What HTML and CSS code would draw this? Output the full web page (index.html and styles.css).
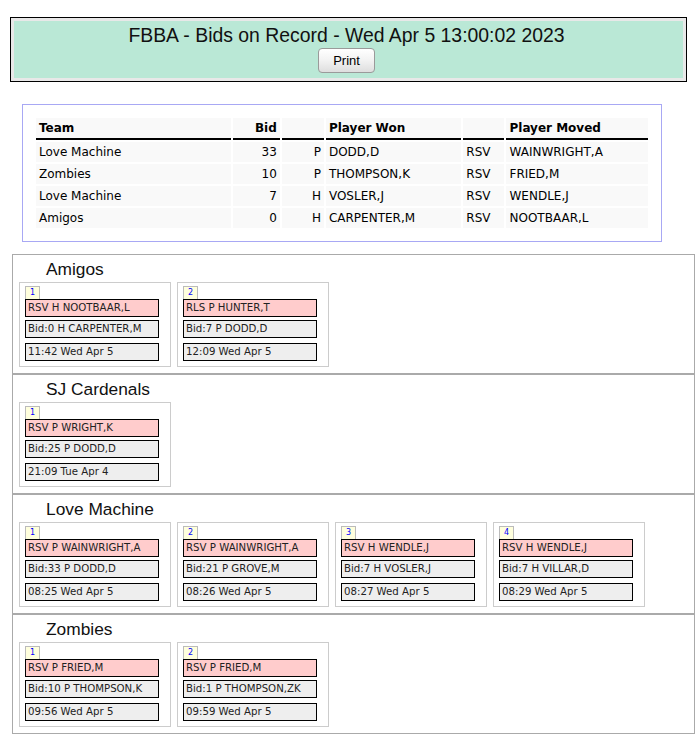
FILE: index.html
```html
<!DOCTYPE html>
<html>
<head>
<meta charset="utf-8">
<title>FBBA - Bids on Record</title>
<link rel="stylesheet" href="styles.css">
</head>
<body>
<div class="banner">
  <div class="banner-inner">
    <div class="title">FBBA - Bids on Record - Wed Apr 5 13:00:02 2023</div>
    <button class="print" type="button">Print</button>
  </div>
</div>

<div class="bids">
  <table class="bid-table">
    <thead>
      <tr>
        <th class="c-team">Team</th>
        <th class="c-bid num">Bid</th>
        <th class="c-pos"></th>
        <th class="c-won">Player Won</th>
        <th class="c-act"></th>
        <th class="c-moved">Player Moved</th>
      </tr>
    </thead>
    <tbody>
      <tr><td>Love Machine</td><td class="num">33</td><td class="num">P</td><td>DODD,D</td><td>RSV</td><td>WAINWRIGHT,A</td></tr>
      <tr><td>Zombies</td><td class="num">10</td><td class="num">P</td><td>THOMPSON,K</td><td>RSV</td><td>FRIED,M</td></tr>
      <tr><td>Love Machine</td><td class="num">7</td><td class="num">H</td><td>VOSLER,J</td><td>RSV</td><td>WENDLE,J</td></tr>
      <tr><td>Amigos</td><td class="num">0</td><td class="num">H</td><td>CARPENTER,M</td><td>RSV</td><td>NOOTBAAR,L</td></tr>
    </tbody>
  </table>
</div>

<div class="teams">
  <section class="team">
    <h2 class="team-name">Amigos</h2>
    <div class="cards">
      <div class="card">
        <div class="badge">1</div>
        <div class="row move">RSV H NOOTBAAR,L</div>
        <div class="row bid">Bid:0 H CARPENTER,M</div>
        <div class="row time">11:42 Wed Apr 5</div>
      </div>
      <div class="card">
        <div class="badge">2</div>
        <div class="row move">RLS P HUNTER,T</div>
        <div class="row bid">Bid:7 P DODD,D</div>
        <div class="row time">12:09 Wed Apr 5</div>
      </div>
    </div>
  </section>

  <section class="team">
    <h2 class="team-name">SJ Cardenals</h2>
    <div class="cards">
      <div class="card">
        <div class="badge">1</div>
        <div class="row move">RSV P WRIGHT,K</div>
        <div class="row bid">Bid:25 P DODD,D</div>
        <div class="row time">21:09 Tue Apr 4</div>
      </div>
    </div>
  </section>

  <section class="team">
    <h2 class="team-name">Love Machine</h2>
    <div class="cards">
      <div class="card">
        <div class="badge">1</div>
        <div class="row move">RSV P WAINWRIGHT,A</div>
        <div class="row bid">Bid:33 P DODD,D</div>
        <div class="row time">08:25 Wed Apr 5</div>
      </div>
      <div class="card">
        <div class="badge">2</div>
        <div class="row move">RSV P WAINWRIGHT,A</div>
        <div class="row bid">Bid:21 P GROVE,M</div>
        <div class="row time">08:26 Wed Apr 5</div>
      </div>
      <div class="card">
        <div class="badge">3</div>
        <div class="row move">RSV H WENDLE,J</div>
        <div class="row bid">Bid:7 H VOSLER,J</div>
        <div class="row time">08:27 Wed Apr 5</div>
      </div>
      <div class="card">
        <div class="badge">4</div>
        <div class="row move">RSV H WENDLE,J</div>
        <div class="row bid">Bid:7 H VILLAR,D</div>
        <div class="row time">08:29 Wed Apr 5</div>
      </div>
    </div>
  </section>

  <section class="team">
    <h2 class="team-name">Zombies</h2>
    <div class="cards">
      <div class="card">
        <div class="badge">1</div>
        <div class="row move">RSV P FRIED,M</div>
        <div class="row bid">Bid:10 P THOMPSON,K</div>
        <div class="row time">09:56 Wed Apr 5</div>
      </div>
      <div class="card">
        <div class="badge">2</div>
        <div class="row move">RSV P FRIED,M</div>
        <div class="row bid">Bid:1 P THOMPSON,ZK</div>
        <div class="row time">09:59 Wed Apr 5</div>
      </div>
    </div>
  </section>
</div>
</body>
</html>
```

FILE: styles.css
```css
html, body {
  background: #fff;
}

body {
  margin: 8px 0 8px 8px;
  font-family: "DejaVu Sans", Verdana, sans-serif;
  color: #000;
}

/* ---------- banner ---------- */
.banner {
  margin: 9px 8px 0 2px;
  border: 1px solid #000;
  background: #e8e8e8;
  padding: 3px;
}

.banner-inner {
  background: #bae8d6;
  padding: 3px 4px 5px 0;
  text-align: center;
}

.title {
  font-family: "Liberation Sans", Arial, sans-serif;
  font-size: 19.4px;
  line-height: 22px;
  color: #111;
}

.print {
  display: block;
  margin: 2px auto 0;
  width: 57px;
  height: 25px;
  padding: 0;
  border: 1px solid #9a9a9a;
  border-radius: 4px;
  background: linear-gradient(#ffffff, #f2f2f2 50%, #dedede);
  font-family: "Liberation Sans", Arial, sans-serif;
  font-size: 13px;
  color: #000;
}

/* ---------- bids table ---------- */
.bids {
  margin: 22px 0 0 14px;
  width: 640px;
  box-sizing: border-box;
  border: 1px solid #a8a8f4;
  padding: 11px 11px;
}

.bid-table {
  width: 100%;
  border-collapse: separate;
  border-spacing: 2px;
  table-layout: fixed;
  font-size: 12px;
}

.bid-table th,
.bid-table td {
  height: 20px;
  padding: 0 3px;
  line-height: 20px;
  background: #f9f9f9;
  text-align: left;
  white-space: nowrap;
  vertical-align: middle;
}

.bid-table th {
  font-weight: bold;
  border-bottom: 2px solid #000;
}

.bid-table .num {
  text-align: right;
}

.c-team { width: 188px; }
.c-bid { width: 41px; }
.c-pos { width: 36px; }
.c-won { width: 129px; }
.c-act { width: 35px; }
.c-moved { width: 135px; }

/* ---------- team sections ---------- */
.teams {
  margin: 12px 0 0 4px;
}

.team {
  border: 1px solid #aaa;
  padding: 0 6px 6px;
}

.team-name {
  margin: 0;
  padding-left: 27px;
  height: 27px;
  font-family: "Liberation Sans", Arial, sans-serif;
  font-size: 17.33px;
  font-weight: normal;
  line-height: 28px;
  color: #111;
}

.cards {
  display: flex;
  gap: 6px;
}

.card {
  width: 152px;
  box-sizing: border-box;
  border: 1px solid #ccc;
  padding: 3px 5px 5px;
}

.badge {
  width: 15px;
  height: 13px;
  box-sizing: border-box;
  border: 1px solid #bbb;
  border-bottom: none;
  background: #ffffdd;
  color: #0000ff;
  font-size: 8px;
  line-height: 12px;
  text-align: center;
}

.row {
  width: 134px;
  height: 18px;
  box-sizing: border-box;
  border: 1px solid #000;
  padding-left: 2px;
  font-size: 10.2px;
  line-height: 16px;
  color: #222;
  white-space: nowrap;
  overflow: hidden;
}

.move {
  background: #ffcccc;
}

.bid {
  margin-top: 3px;
  background: #eeeeee;
}

.time {
  margin-top: 5px;
  background: #eeeeee;
}
```
